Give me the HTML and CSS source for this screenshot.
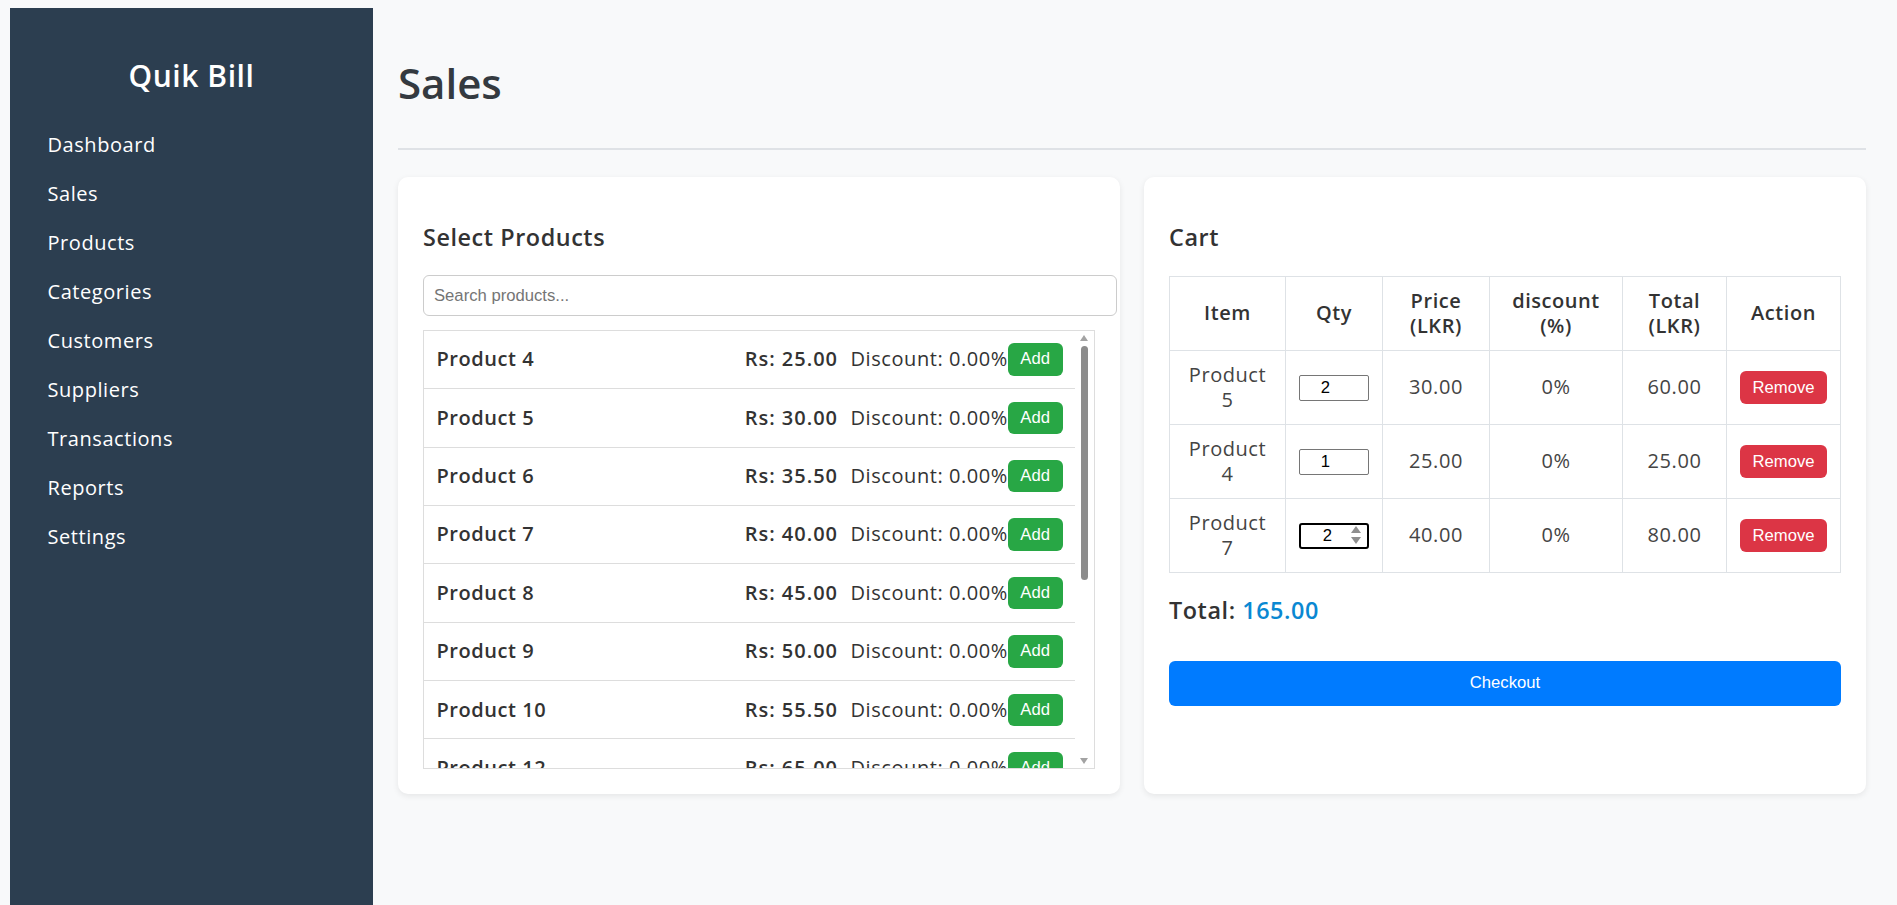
FILE: index.html
```html
<!DOCTYPE html>
<html lang="en">
<head>
<meta charset="utf-8">
<title>Quik Bill - Sales</title>
<link rel="stylesheet" href="styles.css">
</head>
<body>
<div class="layout">
  <aside class="sidebar">
    <h2 class="brand">Quik Bill</h2>
    <ul class="nav">
      <li><a href="#">Dashboard</a></li>
      <li><a href="#">Sales</a></li>
      <li><a href="#">Products</a></li>
      <li><a href="#">Categories</a></li>
      <li><a href="#">Customers</a></li>
      <li><a href="#">Suppliers</a></li>
      <li><a href="#">Transactions</a></li>
      <li><a href="#">Reports</a></li>
      <li><a href="#">Settings</a></li>
    </ul>
  </aside>
  <main class="main">
    <div class="page-head">
      <h1 class="page-title">Sales</h1>
    </div>
    <div class="cards">
      <section class="card">
        <h3 class="card-title">Select Products</h3>
        <input class="search" type="text" placeholder="Search products...">
        <div class="plist">
          <div class="rows">
            <div class="prow"><span class="pname">Product 4</span><span class="pright"><span class="price">Rs: 25.00</span><span class="disc">Discount: 0.00%</span><button class="btn btn-add">Add</button></span></div>
            <div class="prow"><span class="pname">Product 5</span><span class="pright"><span class="price">Rs: 30.00</span><span class="disc">Discount: 0.00%</span><button class="btn btn-add">Add</button></span></div>
            <div class="prow"><span class="pname">Product 6</span><span class="pright"><span class="price">Rs: 35.50</span><span class="disc">Discount: 0.00%</span><button class="btn btn-add">Add</button></span></div>
            <div class="prow"><span class="pname">Product 7</span><span class="pright"><span class="price">Rs: 40.00</span><span class="disc">Discount: 0.00%</span><button class="btn btn-add">Add</button></span></div>
            <div class="prow"><span class="pname">Product 8</span><span class="pright"><span class="price">Rs: 45.00</span><span class="disc">Discount: 0.00%</span><button class="btn btn-add">Add</button></span></div>
            <div class="prow"><span class="pname">Product 9</span><span class="pright"><span class="price">Rs: 50.00</span><span class="disc">Discount: 0.00%</span><button class="btn btn-add">Add</button></span></div>
            <div class="prow"><span class="pname">Product 10</span><span class="pright"><span class="price">Rs: 55.50</span><span class="disc">Discount: 0.00%</span><button class="btn btn-add">Add</button></span></div>
            <div class="prow"><span class="pname">Product 12</span><span class="pright"><span class="price">Rs: 65.00</span><span class="disc">Discount: 0.00%</span><button class="btn btn-add">Add</button></span></div>
          </div>
          <div class="sbar">
            <svg class="sb-arrow" width="8" height="6" viewBox="0 0 8 6"><path d="M4 0 L8 6 L0 6 Z" fill="#a3a3a3"/></svg>
            <div class="sb-thumb"></div>
            <svg class="sb-arrow sb-down" width="8" height="6" viewBox="0 0 8 6"><path d="M0 0 L8 0 L4 6 Z" fill="#a3a3a3"/></svg>
          </div>
        </div>
      </section>
      <section class="card">
        <h3 class="card-title card-title-cart">Cart</h3>
        <table class="cart">
          <thead>
            <tr>
              <th class="c-item">Item</th>
              <th class="c-qty">Qty</th>
              <th class="c-price">Price (LKR)</th>
              <th class="c-disc">discount (%)</th>
              <th class="c-total">Total (LKR)</th>
              <th class="c-act">Action</th>
            </tr>
          </thead>
          <tbody>
            <tr>
              <td>Product 5</td>
              <td><input class="qty" type="text" value="2"></td>
              <td>30.00</td>
              <td>0%</td>
              <td>60.00</td>
              <td><button class="btn btn-remove">Remove</button></td>
            </tr>
            <tr>
              <td>Product 4</td>
              <td><input class="qty" type="text" value="1"></td>
              <td>25.00</td>
              <td>0%</td>
              <td>25.00</td>
              <td><button class="btn btn-remove">Remove</button></td>
            </tr>
            <tr>
              <td>Product 7</td>
              <td><span class="qty-focus"><input class="qty-inner" type="text" value="2"><svg class="spin" width="12" height="21" viewBox="0 0 12 21"><path d="M6 1 L11 8 L1 8 Z" fill="#8f8f8f"/><path d="M1 12 L11 12 L6 19 Z" fill="#8f8f8f"/></svg></span></td>
              <td>40.00</td>
              <td>0%</td>
              <td>80.00</td>
              <td><button class="btn btn-remove">Remove</button></td>
            </tr>
          </tbody>
        </table>
        <h3 class="total">Total: <span class="total-val">165.00</span></h3>
        <button class="btn btn-checkout">Checkout</button>
      </section>
    </div>
  </main>
</div>
</body>
</html>
```

FILE: styles.css
```css
* { box-sizing: border-box; }

html, body {
  height: 100%;
}

body {
  margin: 0;
  overflow: hidden;
  background: #f8f9fa;
  color: #333;
  font-family: "Open Sans", "DejaVu Sans", sans-serif;
  letter-spacing: 0.035em;
  line-height: 1.22;
}

.layout {
  display: flex;
  height: 100vh;
  padding: 8px 0 0 10px;
}

/* Sidebar */
.sidebar {
  flex: 0 0 363px;
  background: #2c3e50;
  color: #fff;
  padding: 25px;
}

.brand {
  margin: 25px 0 26px;
  text-align: center;
  font-size: 30px;
  font-weight: 600;
  line-height: 1.22;
}

.nav {
  list-style: none;
  margin: 0;
  padding: 0;
}

.nav a {
  display: block;
  padding: 12.3px 12.5px;
  color: #fff;
  text-decoration: none;
  font-size: 20px;
}

/* Main */
.main {
  flex: 1;
  min-width: 0;
  padding: 25px 31px 0 25px;
}

.page-head {
  border-bottom: 2px solid #dfe2e6;
  padding-bottom: 40px;
  margin-bottom: 26.4px;
}

.page-title {
  margin: 0;
  padding-top: 25px;
  font-family: "Open Sans", sans-serif;
  font-size: 42px;
  font-weight: 600;
  letter-spacing: 0;
  line-height: 1.2;
  color: #343a40;
}

.cards {
  display: grid;
  grid-template-columns: 1fr 1fr;
  gap: 24px;
  align-items: stretch;
}

.card {
  background: #fff;
  border-radius: 10px;
  padding: 25px;
  box-shadow: 0 2px 6px rgba(0, 0, 0, 0.08);
}

.card-title {
  margin: 21.4px 0 23.4px;
  font-size: 23.4px;
  font-weight: 600;
  line-height: 1.22;
  color: #333;
}

.card-title-cart {
  margin-bottom: 24.4px;
}

/* Search */
.search {
  display: block;
  box-sizing: content-box;
  width: 100%;
  height: 19px;
  margin: 3px 0 13.7px;
  padding: 10px;
  border: 1px solid #ccc;
  border-radius: 6px;
  font-family: "Liberation Sans", Arial, sans-serif;
  font-size: 16.67px;
  line-height: 19px;
  letter-spacing: 0;
  color: #333;
  outline: none;
}

.search::placeholder {
  color: #757575;
}

/* Product list */
.plist {
  display: flex;
  height: 439px;
  border: 1px solid #ddd;
  overflow: hidden;
}

.rows {
  flex: 1;
  min-width: 0;
  overflow: hidden;
}

.prow {
  display: flex;
  align-items: center;
  justify-content: space-between;
  padding: 12.5px;
  border-bottom: 1px solid #ddd;
  font-size: 20px;
}

.pname {
  font-weight: 600;
  color: #333;
}

.pright {
  display: flex;
  align-items: center;
}

.price {
  font-weight: 600;
  margin-right: 12.5px;
  letter-spacing: 0.05em;
}

.disc {
  font-weight: 400;
}

.sbar {
  flex: 0 0 19px;
  display: flex;
  flex-direction: column;
  align-items: center;
  padding: 4px 1px 4px 0;
}

.sb-arrow {
  display: block;
  flex: none;
}

.sb-thumb {
  width: 7px;
  height: 234px;
  margin-top: 5px;
  border-radius: 4px;
  background: #8c8c8c;
}

.sb-down {
  margin-top: auto;
}

/* Buttons */
.btn {
  border: none;
  color: #fff;
  font-family: "Liberation Sans", Arial, sans-serif;
  font-size: 16.67px;
  letter-spacing: 0;
  line-height: 20px;
  padding: 6.2px 12.5px;
  border-radius: 6px;
  cursor: pointer;
}

.btn-add {
  background: #28a745;
}

.btn-remove {
  background: #dc3545;
  padding: 6.5px 12.5px;
}

.btn-checkout {
  display: block;
  width: 100%;
  margin-top: 0;
  padding: 12.5px;
  background: #007bff;
}

/* Cart table */
.cart {
  width: 100%;
  border-collapse: collapse;
  table-layout: fixed;
  font-size: 20px;
}

.cart th,
.cart td {
  border: 1px solid #dee2e6;
  padding: 12.1px 12.5px;
  text-align: center;
  vertical-align: middle;
}

.cart th {
  font-weight: 600;
  color: #333;
}

.cart td {
  font-weight: 400;
  color: #444;
}

.c-item { width: 116px; }
.c-qty { width: 97px; }
.c-price { width: 107px; }
.c-disc { width: 133px; }
.c-total { width: 104px; }
.c-act { width: 114px; }

.qty {
  display: block;
  width: 70px;
  height: 26px;
  margin: 0 auto;
  padding: 0 17px 0 0;
  border: 1px solid #767676;
  border-radius: 2px;
  font-family: "Liberation Sans", Arial, sans-serif;
  font-size: 16.67px;
  letter-spacing: 0;
  text-align: center;
  color: #000;
  background: #fff;
}

.qty-focus {
  display: flex;
  align-items: center;
  width: 70px;
  height: 26px;
  margin: 0 auto;
  padding: 0 5px 0 0;
  border: 2px solid #000;
  border-radius: 3px;
  background: #fff;
}

.qty-inner {
  flex: 1;
  min-width: 0;
  height: 100%;
  padding: 0 0 0 4px;
  border: none;
  outline: none;
  background: transparent;
  font-family: "Liberation Sans", Arial, sans-serif;
  font-size: 16.67px;
  letter-spacing: 0;
  text-align: center;
  color: #000;
}

.spin {
  display: block;
  flex: none;
}

/* Total */
.total {
  margin: 23.4px 0 36px;
  font-size: 23.4px;
  font-weight: 600;
  line-height: 1.22;
  color: #333;
}

.total-val {
  color: #0a88d2;
}
```
